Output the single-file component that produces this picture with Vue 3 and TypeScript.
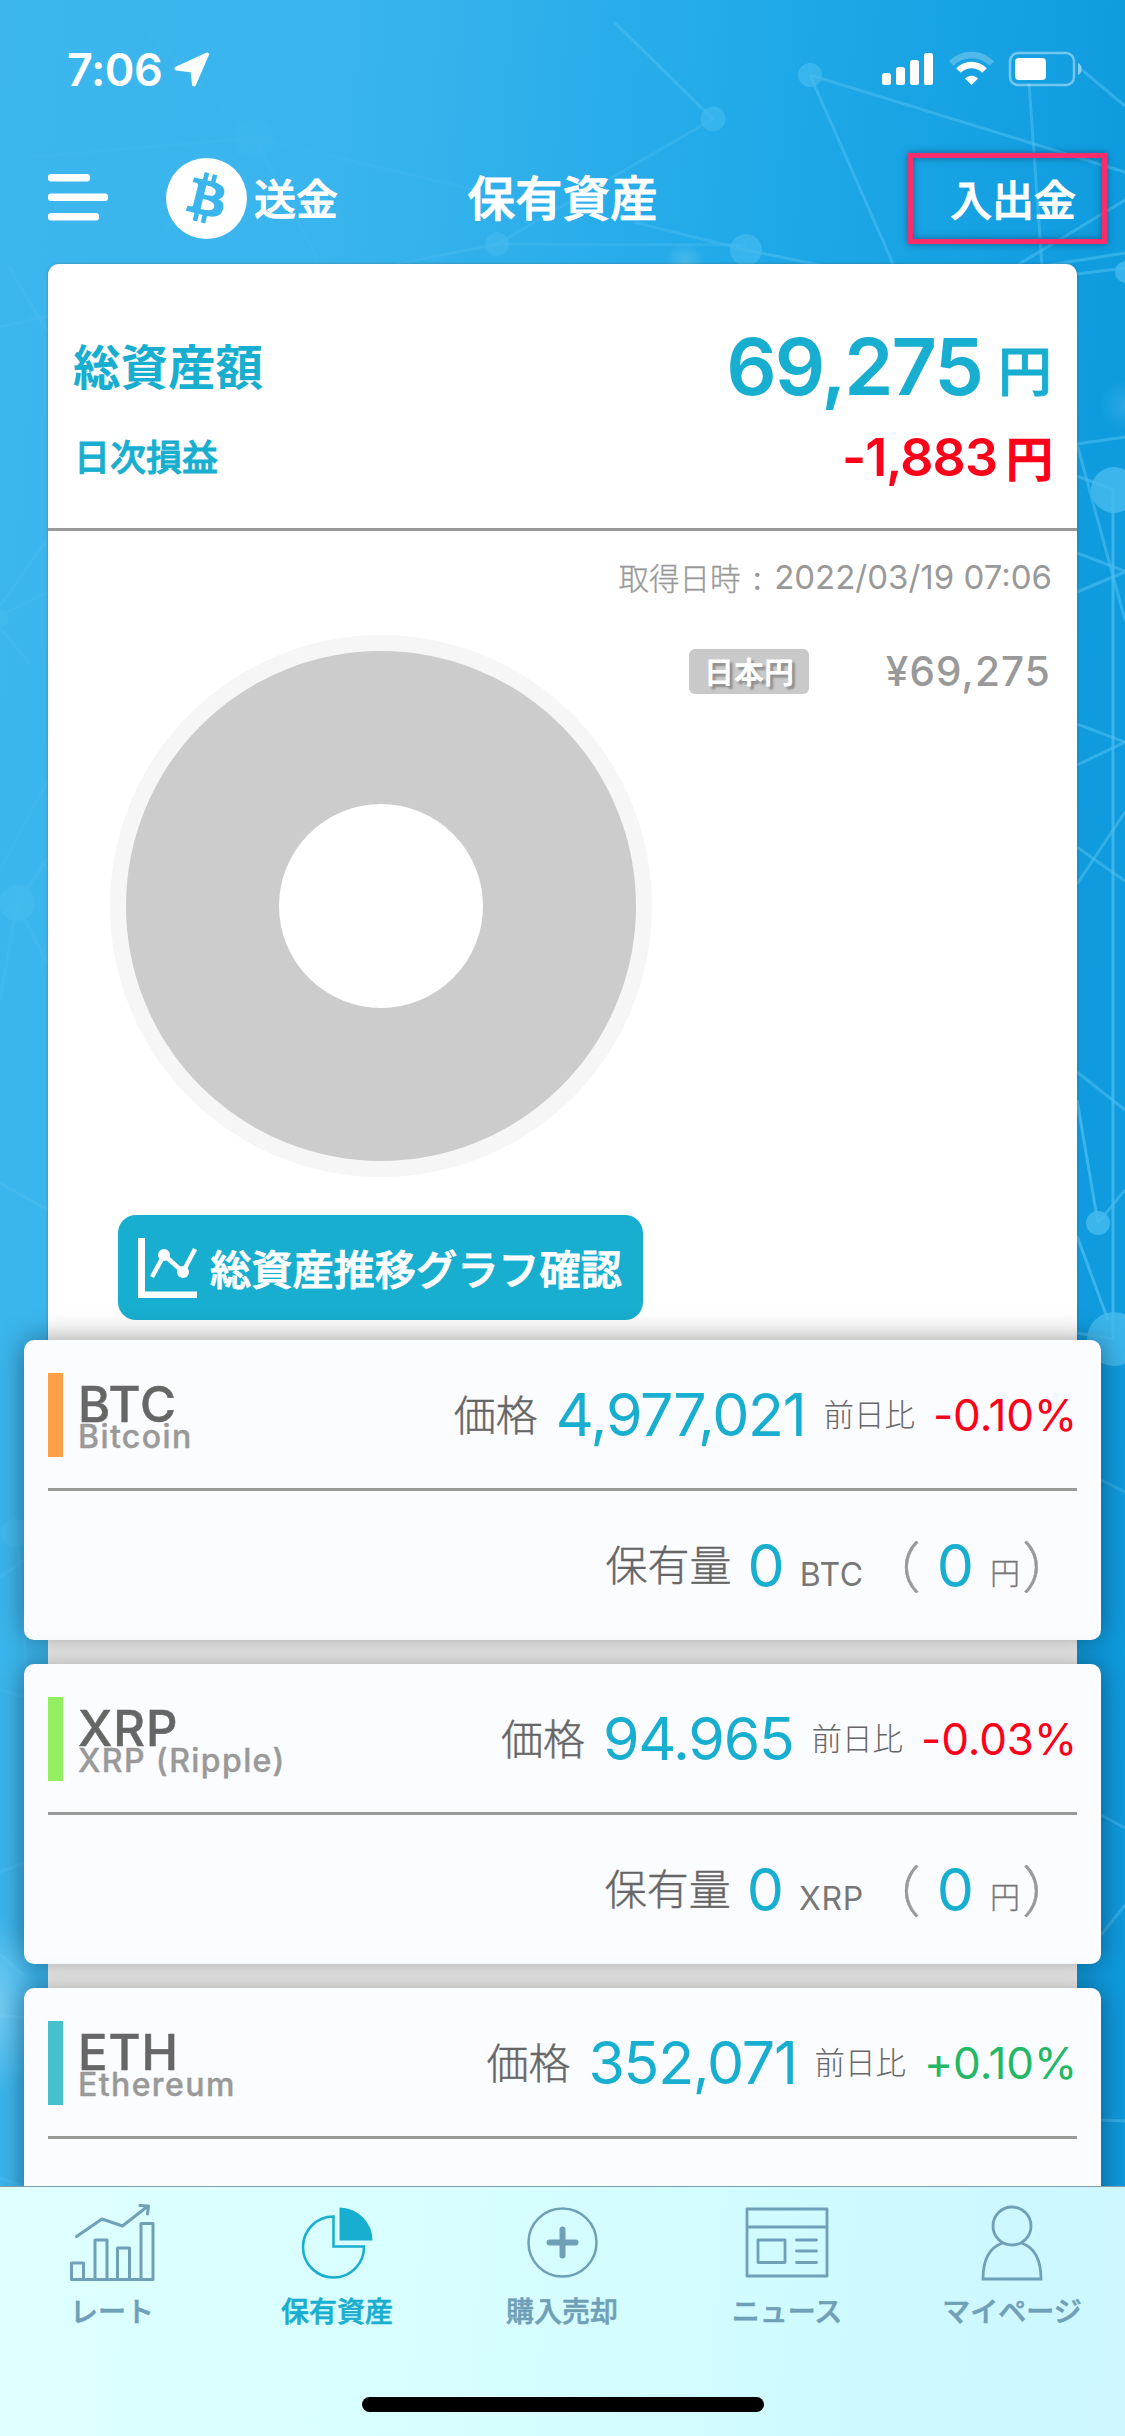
<script setup lang="ts">
interface Coin {
  code: string
  name: string
  color: string
  price: string
  change: string
  up: boolean
  held?: string
}

const coins: Coin[] = [
  { code: 'BTC', name: 'Bitcoin', color: '#ff9f48', price: '4,977,021', change: '-0.10%', up: false, held: '0' },
  { code: 'XRP', name: 'XRP (Ripple)', color: '#94ee62', price: '94.965', change: '-0.03%', up: false, held: '0' },
  { code: 'ETH', name: 'Ethereum', color: '#45c0cc', price: '352,071', change: '+0.10%', up: true },
]

// Background network: [x1, y1, x2, y2, opacity]
const links: number[][] = [
  [32, 157, 254, 138, 0.3], [115, 0, 254, 138, 0.2], [254, 138, 497, 195, 0.35], [254, 138, 318, 260, 0.3],
  [254, 138, 135, 260, 0.25], [397, 264, 497, 244, 0.5], [497, 244, 713, 119, 0.5], [497, 244, 746, 245, 0.5],
  [614, 22, 713, 119, 0.8], [634, 222, 746, 250, 0.6], [746, 250, 824, 266, 0.8], [810, 75, 894, 266, 0.8],
  [810, 75, 1125, 172, 0.8], [1029, 83, 1042, 266, 0.8], [1082, 70, 1125, 106, 0.8], [1016, 266, 1125, 200, 0.8],
  [1043, 266, 1125, 253, 0.8], [1077, 274, 1125, 268, 0.8],
  [1077, 444, 1125, 437, 0.8], [1077, 444, 1125, 620, 0.8], [1077, 476, 1114, 490, 0.8], [1113, 490, 1113, 1339, 1],
  [1077, 553, 1125, 571, 0.8], [1077, 592, 1125, 572, 0.8], [1077, 724, 1125, 742, 0.8], [1077, 765, 1125, 742, 0.8],
  [1077, 847, 1125, 881, 0.8], [1077, 884, 1125, 812, 0.8], [1077, 1072, 1125, 1110, 0.8], [1077, 1100, 1098, 1223, 1],
  [1098, 1223, 1125, 1190, 0.8], [1077, 1236, 1108, 1320, 1], [1077, 1333, 1114, 1339, 0.8],
  [9, 267, 48, 333, 0.5], [0, 327, 48, 316, 0.5], [48, 538, 0, 606, 0.5], [48, 592, 0, 616, 0.5], [0, 628, 30, 664, 0.5],
  [0, 870, 48, 780, 0.4], [17, 903, 48, 858, 0.5], [17, 903, 48, 965, 0.5], [0, 1000, 17, 903, 0.5],
  [0, 1183, 48, 1210, 0.7], [0, 1577, 24, 1560, 0.8], [17, 1533, 27, 1680, 0.6], [0, 1690, 48, 1704, 0.6],
  [0, 1872, 24, 1863, 0.8], [0, 1954, 24, 1976, 0.8], [0, 2015, 24, 2018, 0.8], [0, 2178, 24, 2186, 0.8],
  [1101, 1480, 1125, 1492, 0.6], [1101, 1815, 1125, 1828, 0.7], [1101, 1935, 1125, 1905, 0.7], [1101, 2120, 1125, 2121, 0.8],
]

// Background network: [cx, cy, r, opacity]
const nodes: number[][] = [
  [254, 138, 20, 0.35], [497, 244, 12, 0.7], [713, 119, 12.5, 0.7], [810, 75, 12, 0.8], [746, 250, 16, 0.8],
  [1126, 272, 11, 0.9], [1114, 490, 23, 1], [1098, 1223, 12, 1], [1114, 1339, 27, 1],
  [0, 618, 9, 0.7], [17, 903, 18, 0.8], [15, 1533, 14, 0.8],
]
</script>

<template>
  <div class="screen">
    <svg class="backdrop" viewBox="0 0 1125 2436" width="1125" height="2436">
      <defs>
        <radialGradient id="glow">
          <stop offset="0" stop-color="#c4ebfc" stop-opacity="0.75" />
          <stop offset="1" stop-color="#c4ebfc" stop-opacity="0" />
        </radialGradient>
      </defs>
      <g stroke="#4abcf0" stroke-width="3">
        <line v-for="(l, i) in links" :key="i" :x1="l[0]" :y1="l[1]" :x2="l[2]" :y2="l[3]" :stroke-opacity="l[4] * 0.75" />
      </g>
      <circle v-for="(n, i) in nodes" :key="i" :cx="n[0]" :cy="n[1]" :r="n[2]" fill="#46bbef" :fill-opacity="n[3] * 0.8" />
      <ellipse cx="-5" cy="2005" rx="45" ry="90" fill="url(#glow)" opacity="0.6" />
      <circle cx="685" cy="262" r="20" fill="url(#glow)" opacity="0.3" />
      <circle cx="1125" cy="405" r="25" fill="url(#glow)" opacity="0.2" />
    </svg>

    <div class="content">
      <div class="status">
        <span class="clock">7:06</span>
        <svg class="locate" width="36" height="36" viewBox="0 0 36 36">
          <path d="M33 2.500 20 32.500 18.500 18.500 2.500 16.500Z" fill="#fff" stroke="#fff" stroke-width="4" stroke-linejoin="round" />
        </svg>
        <svg class="signals" width="202" height="36" viewBox="0 0 202 36">
          <g fill="#fff">
            <rect x="2" y="22" width="9" height="12" rx="2.500" />
            <rect x="16" y="16" width="9" height="18" rx="2.500" />
            <rect x="30" y="9" width="9" height="25" rx="2.500" />
            <rect x="44" y="2" width="9" height="32" rx="2.500" />
          </g>
          <g fill="none" stroke="#fff" stroke-width="6.500">
            <path d="M71.300 12.500a28 28 0 0 1 40.400 0" opacity="0.25" />
            <path d="M78.500 19.500a18 18 0 0 1 26 0" />
          </g>
          <path d="M91.500 34l-6.500-6.500c4-3.700 9-3.700 13 0Z" fill="#fff" />
          <rect x="130" y="2" width="64" height="32" rx="8" fill="none" stroke="#fff" stroke-opacity="0.42" stroke-width="2.500" />
          <rect x="135" y="7" width="31" height="22" rx="4" fill="#fff" />
          <path d="M198 12c5 2 5 10 0 12Z" fill="#fff" opacity="0.5" />
        </svg>
      </div>

      <header class="header">
        <div class="left">
          <svg width="60" height="48" viewBox="0 0 60 48">
            <g fill="#fff">
              <rect y="0" width="42" height="7.500" rx="3" />
              <rect y="19.500" width="60" height="7.500" rx="3" />
              <rect y="39" width="51" height="7.500" rx="3" />
            </g>
          </svg>
          <svg class="coin" width="81" height="81" viewBox="0 0 24 24">
            <path fill="#fff" fill-rule="evenodd" d="M12 0a12 12 0 1 1 0 24a12 12 0 0 1 0-24ZM17.288 10.291c.24-1.59-.974-2.45-2.64-3.03l.54-2.153-1.315-.33-.525 2.107c-.345-.087-.705-.167-1.064-.25l.526-2.127-1.32-.33-.54 2.165c-.285-.067-.565-.132-.84-.2l-1.815-.45-.35 1.407s.975.225.955.236c.535.136.63.486.615.766l-1.477 5.92c-.075.166-.24.406-.614.314.015.02-.96-.24-.96-.24l-.66 1.51 1.71.426.93.242-.54 2.19 1.32.327.54-2.17c.36.1.705.19 1.05.273l-.51 2.154 1.32.33.545-2.19c2.24.427 3.93.257 4.64-1.774.57-1.637-.03-2.58-1.217-3.196.854-.193 1.5-.76 1.68-1.93h.01zm-3.01 4.22c-.404 1.64-3.157.75-4.05.53l.72-2.9c.896.23 3.757.67 3.33 2.37zm.41-4.24c-.37 1.49-2.662.735-3.405.55l.654-2.64c.744.18 3.137.524 2.75 2.084v.006z" />
          </svg>
          <span class="jp semi send">送金</span>
        </div>
        <h1 class="jp semi title">保有資産</h1>
        <div class="right"><span class="jp semi transfer">入出金</span></div>
      </header>

      <section class="summary">
        <div class="totals">
          <div class="line total">
            <span class="jp cap">総資産額</span>
            <span class="amount"><b class="num">69,275</b><span class="jp semi yen">円</span></span>
          </div>
          <div class="line daily">
            <span class="jp semi cap">日次損益</span>
            <span class="amount"><b class="num">-1,883</b><span class="jp semi yen">円</span></span>
          </div>
        </div>
        <div class="stamp"><span class="jp">取得日時</span><span class="sep">:</span><span class="when">2022/03/19 07:06</span></div>
        <div class="chart-row">
          <div class="left-col">
            <svg width="542" height="542" viewBox="0 0 542 542">
              <circle cx="271" cy="271" r="271" fill="#f6f6f6" />
              <circle cx="271" cy="271" r="178.500" fill="#fff" stroke="#ccc" stroke-width="153" />
            </svg>
            <button class="graph">
              <svg width="60" height="60" viewBox="0 0 60 60" fill="none" stroke="#fff">
                <path d="M3.500 0V57H59" stroke-width="7" />
                <path d="M14 39 26 17 45 34 57 11" stroke-width="4.500" stroke-linejoin="round" />
                <circle cx="26" cy="17" r="6" fill="#fff" stroke="none" />
                <circle cx="45" cy="34" r="6" fill="#fff" stroke="none" />
              </svg>
              <span class="jp semi">総資産推移グラフ確認</span>
            </button>
          </div>
          <div class="legend"><span class="jp badge">日本円</span><span class="value">¥69,275</span></div>
        </div>
      </section>

      <ul class="coins">
        <li v-for="c in coins" :key="c.code" class="card">
          <div class="row top">
            <i class="bar" :style="{ background: c.color }"></i>
            <div class="names"><span class="code">{{ c.code }}</span><span class="name">{{ c.name }}</span></div>
            <span class="jp label">価格</span>
            <span class="price">{{ c.price }}</span>
            <span class="jp prev">前日比</span>
            <span class="change" :class="{ up: c.up }">{{ c.change }}</span>
          </div>
          <div v-if="c.held" class="row hold">
            <span class="jp label">保有量</span>
            <span class="zero first">{{ c.held }}</span>
            <span class="unit">{{ c.code }}</span>
            <span class="jp paren">（</span>
            <span class="zero second">0</span>
            <span class="jp en">円</span>
            <span class="jp paren">）</span>
          </div>
        </li>
      </ul>
    </div>

    <nav class="tabs">
      <div class="items">
        <div class="tab">
          <svg width="90" height="80" viewBox="0 0 90 80" fill="none" stroke="currentColor" stroke-width="3" stroke-linejoin="round" stroke-linecap="round">
            <path d="M3.500 76.500V60H15.500V76.500M27 76.500V37H39V76.500M49.500 76.500V45H61.500V76.500M73 76.500V20.500H85V76.500M3.500 76.500H85" />
            <path d="M8.500 33.500 34 16 54.500 23 80 3M72 2.500 80.500 3 79.500 11" />
          </svg>
          <span class="jp semi">レート</span>
        </div>
        <div class="tab active">
          <svg width="90" height="80" viewBox="0 0 90 80">
            <path d="M40.500 13.500A30.500 30.500 0 1 0 71 43.500H40.500Z" fill="none" stroke="currentColor" stroke-width="2.500" />
            <path d="M46.500 4.500A33 33 0 0 1 79.500 37.500H46.500Z" fill="currentColor" />
          </svg>
          <span class="jp semi">保有資産</span>
        </div>
        <div class="tab">
          <svg width="90" height="80" viewBox="0 0 90 80" fill="none" stroke="currentColor">
            <circle cx="44.500" cy="39.500" r="34" stroke-width="2.500" />
            <path d="M44.500 26.500V52.500M31.500 39.500H57.500" stroke-width="6" stroke-linecap="round" />
          </svg>
          <span class="jp semi">購入売却</span>
        </div>
        <div class="tab">
          <svg width="90" height="80" viewBox="0 0 90 80" fill="none" stroke="currentColor" stroke-width="2.800" stroke-linejoin="round" stroke-linecap="round">
            <path d="M4 6H84V73H4ZM4 24H84M15 37H42V59.500H15ZM53.500 37H73.500M53.500 48H73.500M53.500 59.500H73.500" />
          </svg>
          <span class="jp semi">ニュース</span>
        </div>
        <div class="tab">
          <svg width="90" height="80" viewBox="0 0 90 80" fill="none" stroke="currentColor" stroke-width="2.800">
            <circle cx="44" cy="23" r="19" />
            <path d="M34.500 40C21.500 44.500 15 57.500 15 76H73C73 57.500 66.500 44.500 53.500 40" />
          </svg>
          <span class="jp semi">マイページ</span>
        </div>
      </div>
      <div class="home"></div>
    </nav>
  </div>
</template>

<style>
body {
  margin: 0;
}
</style>

<style scoped>
.screen {
  position: relative;
  width: 1125px;
  height: 2436px;
  overflow: hidden;
  display: flex;
  flex-direction: column;
  font-family: Inter, "Noto Sans CJK JP", sans-serif;
  line-height: 1;
  background: linear-gradient(95deg, #3cb6ed 0%, #3ab5ed 25%, #20a9e8 58%, #0f9cdf 85%, #0f99dd 100%);
}
.jp {
  font-family: "Noto Sans CJK JP", sans-serif;
  line-height: 1;
  white-space: nowrap;
}
/* semibold: medium face thickened by a hairline stroke */
.semi {
  font-weight: 500;
  -webkit-text-stroke: 0.9px currentColor;
}
.backdrop {
  position: absolute;
  left: 0;
  top: 0;
}
.content {
  position: relative;
  height: 2186px;
  overflow: hidden;
}
.status {
  display: flex;
  height: 132px;
  padding: 51px 40px 0 67px;
  box-sizing: border-box;
  color: #fff;
}
.clock {
  width: 107px;
  font-size: 45px;
  font-weight: 600;
  letter-spacing: -0.5px;
  line-height: 38px;
}
.locate {
  margin-top: 1px;
}
.signals {
  margin-left: auto;
  margin-right: 3px;
}
.header {
  display: grid;
  grid-template-columns: 1fr auto 1fr;
  align-items: center;
  height: 132px;
  color: #fff;
}
.left {
  display: flex;
  align-items: center;
  padding-left: 48px;
}
.coin {
  margin: 0 7px 0 58px;
}
.send {
  margin-top: -2px;
  font-size: 42px;
}
.title {
  margin: -5px 0 0;
  font-size: 47.500px;
}
.right {
  justify-self: end;
  box-sizing: border-box;
  width: 199px;
  height: 91px;
  margin-right: 18px;
  padding-right: 26px;
  border: 5px solid #f92c6c;
  display: flex;
  align-items: center;
  justify-content: flex-end;
  box-shadow: 0 0 7px rgba(0, 40, 70, 0.5), inset 0 0 7px rgba(0, 40, 70, 0.5);
}
.transfer {
  font-size: 42px;
}
.summary {
  box-sizing: border-box;
  height: 1076px;
  margin: 0 48px;
  background: #fff;
  border-radius: 11px 11px 0 0;
  box-shadow: 0 0 3px rgba(60, 80, 90, 0.5);
}
.totals {
  box-sizing: border-box;
  height: 267px;
  padding: 56px 25px 0 25px;
  border-bottom: 3px solid #999;
  color: #18aecf;
}
.line {
  display: flex;
  justify-content: space-between;
}
.amount {
  display: flex;
}
.total {
  height: 92px;
}
.total .cap {
  margin-top: 21px;
  font-size: 47.500px;
  font-weight: 700;
}
.total .num {
  margin-right: 16px;
  font-size: 79px;
  font-weight: 600;
  letter-spacing: -2px;
  line-height: 93px;
}
.total .yen {
  margin-top: 22px;
  font-size: 54px;
}
.daily .cap {
  margin: 25px 0 0 1px;
  font-size: 36px;
}
.daily .num {
  margin-right: 9px;
  font-size: 52px;
  font-weight: 600;
  letter-spacing: -1px;
  line-height: 91px;
}
.daily .yen {
  margin: 20px -1px 0 0;
  font-size: 47px;
  -webkit-text-stroke-width: 1.500px;
}
.daily .amount {
  color: #ff001a;
}
.stamp {
  display: flex;
  justify-content: flex-end;
  align-items: center;
  height: 94px;
  padding-right: 25px;
  color: #999;
  font-size: 33px;
}
.stamp .jp {
  margin-top: -2px;
  font-size: 30.500px;
  font-weight: 300;
  -webkit-text-stroke: 0.3px currentColor;
}
.when {
  margin-top: -1px;
}
.sep {
  margin: 0 12px;
}
.chart-row {
  display: flex;
  justify-content: space-between;
  padding: 10px 26px 0 62px;
}
.left-col {
  display: flex;
  flex-direction: column;
}
.graph {
  display: flex;
  align-items: center;
  width: 525px;
  height: 105px;
  margin: 38px 0 0 8px;
  padding: 0 0 0 20px;
  border: 0;
  border-radius: 18px;
  background: #18aecf;
  color: #fff;
}
.graph .jp {
  margin-left: 12px;
  font-size: 41.200px;
}
.legend {
  display: flex;
  align-items: center;
  justify-content: space-between;
  width: 362px;
  height: 45px;
  margin-top: 14px;
}
.badge {
  box-sizing: border-box;
  width: 120px;
  height: 45px;
  border-radius: 6px;
  background: #c9c9c9;
  color: #fff;
  font-size: 30px;
  font-weight: 700;
  line-height: 43px;
  text-align: center;
  text-shadow: 3px 3px 2px #909090;
}
.value {
  margin-top: 2px;
  color: #999;
  font-size: 40.500px;
  font-weight: 500;
  letter-spacing: 1.100px;
}
.coins {
  display: flex;
  flex-direction: column;
  gap: 24px;
  margin: 0 24px;
  padding: 0;
  list-style: none;
  position: relative;
}
.coins::before {
  content: "";
  position: absolute;
  inset: 0 24px;
  background: #fff;
}
.card {
  position: relative;
  flex: none;
  height: 300px;
  border-radius: 10px;
  background: #fbfcff;
  box-shadow: 0 0 28px rgba(0, 0, 0, 0.42);
}
.row {
  display: flex;
  align-items: center;
  justify-content: flex-end;
  box-sizing: border-box;
  margin: 0 24px;
}
.top {
  height: 151px;
  border-bottom: 3px solid #999;
}
.bar {
  width: 15px;
  height: 84px;
  margin-top: 2px;
}
.names {
  display: flex;
  flex-direction: column;
  margin: 7px auto 0 15px;
}
.code {
  color: #666;
  font-size: 49px;
  font-weight: 500;
  letter-spacing: 1px;
  line-height: 38px;
  -webkit-text-stroke: 0.5px currentColor;
}
.name {
  color: #999;
  font-size: 32px;
  font-weight: 500;
  letter-spacing: 1.400px;
  line-height: 26px;
  -webkit-text-stroke: 0.4px currentColor;
}
.label {
  margin-top: -2px;
  color: #666;
  font-size: 42px;
  font-weight: 300;
  -webkit-text-stroke: 0.4px currentColor;
}
.price {
  margin: 1px 18px 0 18px;
  color: #18aecf;
  font-size: 59px;
  letter-spacing: -1.300px;
}
.prev {
  margin: -1px 18px 0 0;
  color: #666;
  font-size: 30.500px;
  font-weight: 300;
}
.change {
  margin-top: 2px;
  color: #ff001a;
  font-size: 44px;
  letter-spacing: -0.100px;
}
.change.up {
  color: #22b866;
}
.hold {
  height: 149px;
}
.hold .label {
  margin-top: -5px;
}
.zero {
  color: #18aecf;
  font-size: 59px;
}
.first {
  margin: 0 15px 0 16px;
}
.unit {
  margin: 18px 2px 0 0;
  color: #777;
  font-size: 32px;
  letter-spacing: 0.600px;
}
.second {
  margin: 0 16px 0 16px;
}
.paren {
  margin-top: -4px;
  color: #999;
  font-size: 55px;
  font-weight: 300;
  -webkit-text-stroke: 0.5px currentColor;
}
.en {
  margin: 11px 2px 0 0;
  color: #777;
  font-size: 30px;
  font-weight: 300;
  -webkit-text-stroke: 0.3px currentColor;
}
.tabs {
  position: relative;
  box-sizing: border-box;
  height: 250px;
  border-top: 1px solid #7f9dac;
  background: linear-gradient(95deg, #ddffff 0%, #d8feff 40%, #cefaff 75%, #cdf6ff 100%);
  display: flex;
  flex-direction: column;
  align-items: center;
}
.items {
  display: flex;
  width: 1125px;
}
.tab {
  flex: 1;
  display: flex;
  flex-direction: column;
  align-items: center;
  height: 210px;
  padding-top: 16px;
  box-sizing: border-box;
  color: #70a0b8;
}
.tab.active {
  color: #18aecf;
}
.tab .jp {
  margin: 13px 1px 0 0;
  font-size: 28px;
  -webkit-text-stroke-width: 0.600px;
}
.home {
  width: 402px;
  height: 15px;
  border-radius: 8px;
  background: #000;
}
</style>
